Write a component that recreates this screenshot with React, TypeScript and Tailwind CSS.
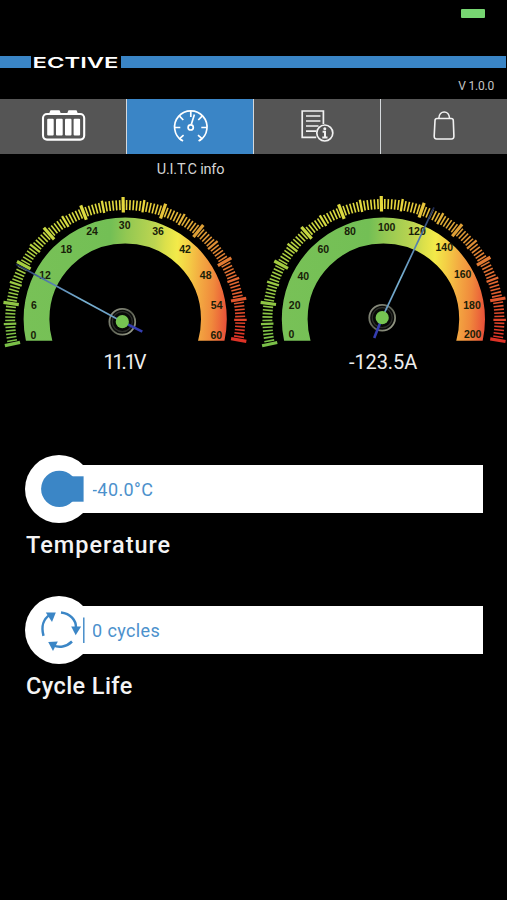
import type { ReactNode } from 'react'

type Label = [text: string, x: number, y: number]

type GaugeProps = {
  id: string
  cx: number
  tickRadius: number
  labels: Label[]
  hub: [number, number]
  needle: [number, number, number, number]
  value: string
  valueClass: string
}

const voltLabels: Label[] = [
  ['0', 33.3, 150],
  ['6', 34, 120],
  ['12', 45, 90.3],
  ['18', 66.3, 64.7],
  ['24', 92, 46.3],
  ['30', 124.7, 40.3],
  ['36', 158, 46.3],
  ['42', 185, 64.7],
  ['48', 205.7, 90],
  ['54', 216.7, 120],
  ['60', 216.3, 150],
]

const ampLabels: Label[] = [
  ['0', 37.3, 149.7],
  ['20', 40.7, 120],
  ['40', 49.3, 91],
  ['60', 69.3, 64.3],
  ['80', 96, 46.7],
  ['100', 132.7, 42.3],
  ['120', 163, 46],
  ['140', 190.3, 62.7],
  ['160', 208.7, 89.7],
  ['180', 218, 120],
  ['200', 218.7, 149.7],
]

const tickStops = [
  [0, 122, 192, 72],
  [0.2, 165, 205, 65],
  [0.35, 215, 220, 65],
  [0.55, 234, 214, 60],
  [0.7, 222, 160, 55],
  [0.85, 226, 105, 50],
  [1, 222, 50, 38],
]

function tickColor(t: number) {
  const i = Math.max(1, tickStops.findIndex((s) => s[0] >= t))
  const a = tickStops[i - 1]
  const b = tickStops[i]
  const k = (t - a[0]) / (b[0] - a[0])
  const mix = (n: number) => Math.round(a[n] + (b[n] - a[n]) * k)
  return `rgb(${mix(1)}, ${mix(2)}, ${mix(3)})`
}

// ten divisions, twelve ticks in each
const TICKS = 120

function Gauge({ id, cx, tickRadius, labels, hub, needle, value, valueClass }: GaugeProps) {
  const ticks = Array.from({ length: TICKS + 1 }, (_, i) => {
    const angle = ((192 - (i * 202) / TICKS) * Math.PI) / 180
    const major = i % 12 === 0
    const medium = i % 6 === 0
    const outer = major ? tickRadius : medium ? tickRadius - 1.5 : tickRadius - 3
    const inner = major ? tickRadius - 15.5 : medium ? tickRadius - 14 : tickRadius - 13
    return {
      x1: cx + Math.cos(angle) * outer,
      y1: 135 - Math.sin(angle) * outer,
      x2: cx + Math.cos(angle) * inner,
      y2: 135 - Math.sin(angle) * inner,
      width: major ? 3.2 : medium ? 2.3 : 1.6,
      color: tickColor(i / TICKS),
    }
  })

  return (
    <div className="flex flex-1 flex-col">
      <svg className="h-[164px] w-full" viewBox="0 0 253.5 164">
        <defs>
          <linearGradient id={`${id}-band`} gradientUnits="userSpaceOnUse" x1={cx - 102} y1="140" x2={cx + 102} y2="152">
            <stop offset="0" stopColor="#78c157" />
            <stop offset="0.4" stopColor="#73bf55" />
            <stop offset="0.48" stopColor="#93c852" />
            <stop offset="0.62" stopColor="#bdd551" />
            <stop offset="0.67" stopColor="#dbe04b" />
            <stop offset="0.73" stopColor="#f3ea49" />
            <stop offset="0.79" stopColor="#f4cd45" />
            <stop offset="0.85" stopColor="#f3ab42" />
            <stop offset="0.92" stopColor="#f0893c" />
            <stop offset="1" stopColor="#e84a38" />
          </linearGradient>
          <linearGradient id={`${id}-needle`} gradientUnits="userSpaceOnUse" x1={needle[0]} y1={needle[1]} x2={hub[0]} y2={hub[1]}>
            <stop offset="0" stopColor="#1c2750" />
            <stop offset="0.25" stopColor="#4c73a4" />
            <stop offset="0.65" stopColor="#79b2d2" />
            <stop offset="1" stopColor="#6597c2" />
          </linearGradient>
          <linearGradient id={`${id}-ring`} x1="0" y1="0" x2="1" y2="1">
            <stop offset="0" stopColor="#9a9d8d" />
            <stop offset="0.5" stopColor="#5c6052" />
            <stop offset="1" stopColor="#a9ad98" />
          </linearGradient>
          <clipPath id={`${id}-clip`}>
            <rect x="0" y="0" width="254" height="155.8" />
          </clipPath>
        </defs>

        {ticks.map((t, i) => (
          <line key={i} x1={t.x1} y1={t.y1} x2={t.x2} y2={t.y2} stroke={t.color} strokeWidth={t.width} />
        ))}

        <circle cx={cx} cy="134.2" r="88.7" fill="none" stroke={`url(#${id}-band)`} strokeWidth="25.8" clipPath={`url(#${id}-clip)`} />

        {labels.map(([text, x, y]) => (
          <text key={text} x={x} y={y + 3.7} textAnchor="middle" className="fill-[#182008] font-['Liberation_Sans',sans-serif] text-[10.5px] font-bold">
            {text}
          </text>
        ))}

        <circle cx={hub[0]} cy={hub[1]} r="12.9" fill="#080908" stroke={`url(#${id}-ring)`} strokeWidth="1.8" />
        <circle cx={hub[0]} cy={hub[1]} r="10" fill="none" stroke="#2c2e29" strokeWidth="1.2" />
        <line x1={needle[0]} y1={needle[1]} x2={hub[0]} y2={hub[1]} stroke={`url(#${id}-needle)`} strokeWidth="1.7" />
        <line x1={hub[0]} y1={hub[1]} x2={needle[2]} y2={needle[3]} stroke="#343db0" strokeWidth="2.6" />
        <circle cx={hub[0]} cy={hub[1]} r="6.6" fill="#76c552" />
      </svg>
      <p className={`text-[20px] leading-[26px] text-[#ededed] ${valueClass}`}>{value}</p>
    </div>
  )
}

function BatteryIcon() {
  return (
    <svg className="h-9 w-12" viewBox="0 0 48 36" fill="none" stroke="#fff">
      <rect x="4" y="6" width="41.2" height="25.6" rx="4" strokeWidth="2.1" />
      <path d="M11 5 12 3h8l1 2M29 5l1-2h7l1 2" fill="#fff" strokeWidth="1.5" />
      <g fill="#fff" stroke="none">
        <rect x="8.2" y="10.7" width="6.5" height="16.8" rx="1" />
        <rect x="17" y="10.7" width="6.7" height="16.8" rx="1" />
        <rect x="26" y="10.7" width="6.5" height="16.8" rx="1" />
        <rect x="34.6" y="10.7" width="6.5" height="16.8" rx="1" />
      </g>
    </svg>
  )
}

function DialIcon() {
  return (
    <svg className="h-9 w-12" viewBox="0 0 48 36" fill="none" stroke="#fff" strokeWidth="1.7">
      <path d="M15.9 32.6A16.2 16.2 0 1 1 33.7 32.6" />
      <path d="M24.8 3v6M8.8 19.5h5.5M35.3 19.5h5.5M13.5 8.2l3.8 3.8M36.1 8.2l-3.8 3.8M13.6 30.6l4-3.4M36 30.6l-4-3.4M13.6 30.6l3.4 2.4M36 30.6l-3.4 2.4" />
      <circle cx="24.7" cy="19.4" r="2.6" />
      <path d="M25.3 16.6 28.4 6.5" />
    </svg>
  )
}

function ReportIcon() {
  return (
    <svg className="h-9 w-12" viewBox="0 0 48 36" fill="none" stroke="#f2f2f2" strokeWidth="1.7">
      <path d="M30.4 16V3H9.2v26.4h14" />
      <path d="M13 8h14.4M13 13h14.4M13 18h12.5M13 23.2h10" />
      <circle cx="31.8" cy="25" r="8" />
      <circle cx="31.8" cy="20.8" r="1.5" fill="#f2f2f2" stroke="none" />
      <path d="M29.6 23.8h2.4v5.5M29.3 29.6h5.2" strokeWidth="2" />
    </svg>
  )
}

function BagIcon() {
  return (
    <svg className="h-9 w-12" viewBox="0 0 48 36" fill="none" stroke="#f2f2f2" strokeWidth="1.6">
      <path d="M17 10.5h14.2q2 0 2.1 2l.6 15.5q.1 3-2.4 3H16.6q-2.5 0-2.4-3L15 12.5q.1-2 2-2Z" />
      <path d="M18.8 10.5c.4-8.6 10.4-8.6 10.8 0" />
    </svg>
  )
}

const tabs = [
  { name: 'Battery', icon: <BatteryIcon />, className: 'bg-[#555]' },
  { name: 'Gauges', icon: <DialIcon />, className: 'bg-[#3a85c6]' },
  { name: 'Info', icon: <ReportIcon />, className: 'bg-[#555]' },
  { name: 'Shop', icon: <BagIcon />, className: 'bg-[#555]' },
]

function ThermometerIcon() {
  return (
    <svg className="h-[68px] w-[68px]" viewBox="0 0 68 68" fill="#3b86c6">
      <circle cx="34.3" cy="33.9" r="18.2" />
      <path d="M34 21.3h24.6v25.4H34Z" />
    </svg>
  )
}

function CycleIcon() {
  return (
    <svg className="h-[68px] w-[68px]" viewBox="0 0 68 68" fill="none" stroke="#3b86c6" strokeWidth="2.5">
      <path d="M18.5 39.8C15.8 30 19 22.5 25 18.8" />
      <path d="M36 16.6C45.5 17.8 51 24 51 31.5" />
      <path d="M47 45.5C41.5 50.8 34 52.3 28 49" />
      <g fill="#3b86c6" stroke="none">
        <path d="m20.8 16.6 10-.2-3.8 9.6Z" />
        <path d="m46.2 30.4 9.9.2-5.4 8.6Z" />
        <path d="m23.2 46 9.6-.5-4.8 9.5Z" />
      </g>
      <path d="M58.8 21.5v25.5" strokeWidth="1.4" />
    </svg>
  )
}

type ReadingProps = { icon: ReactNode; value: string; title: string; titleClass: string }

function Reading({ icon, value, title, titleClass }: ReadingProps) {
  return (
    <section className="pl-[25px] pr-6">
      <div className="flex items-center">
        <div className="z-10 h-[68px] w-[68px] shrink-0 rounded-full bg-white">{icon}</div>
        <div className="-ml-[34px] flex h-12 flex-1 items-center bg-white pt-0.5 pl-[33px] text-[18px] tracking-[0.4px] text-[#4c91cc]">
          {value}
        </div>
      </div>
      <h2 className={`mt-1.5 pl-px text-[23.5px] leading-8 font-medium text-[#f4f4f4] ${titleClass}`}>{title}</h2>
    </section>
  )
}

export default function App() {
  return (
    <main className="flex h-[900px] w-[507px] flex-col overflow-hidden bg-black font-[Roboto,sans-serif]">
      <div className="flex h-14 justify-end pt-[9px] pr-[22px]">
        <div className="h-[9px] w-6 rounded-[1px] bg-[#77d672]" />
      </div>

      <header className="flex h-3 items-stretch">
        <div className="w-[31px] bg-[#3a85c6]" />
        <svg className="h-3 w-[90px] overflow-visible" viewBox="0 0 90 12">
          <text x="1.5" y="11.5" textLength="86" lengthAdjust="spacingAndGlyphs" className="fill-white font-[Inter,sans-serif] text-[15px] font-semibold">
            ECTIVE
          </text>
        </svg>
        <div className="mr-px flex-1 bg-[#3a85c6]" />
      </header>
      <p className="h-[30.5px] pt-[9px] pr-[13px] text-right text-[12px] leading-[18px] tracking-[-0.2px] text-[#c6c6c6]">V 1.0.0</p>

      <nav className="grid h-[55px] shrink-0 grid-cols-4 gap-[1.5px] bg-[#d5d9dc]">
        {tabs.map((tab) => (
          <button key={tab.name} aria-label={tab.name} className={`flex items-center justify-center ${tab.className}`}>
            {tab.icon}
          </button>
        ))}
      </nav>
      <p className="w-[254px] pt-1.5 pl-[127px] text-center text-[14.5px] leading-5 tracking-[-0.2px] text-[#d4d4d4]">U.I.T.C info</p>

      <div className="mt-[5px] flex">
        <Gauge
          id="volt"
          cx={125.2}
          tickRadius={123}
          labels={voltLabels}
          hub={[122.3, 136.7]}
          needle={[16, 79.3, 142.3, 146.7]}
          value="11.1V"
          valueClass="pl-[103.5px] tracking-[-2.2px]"
        />
        <Gauge
          id="amp"
          cx={129.4}
          tickRadius={124}
          labels={ampLabels}
          hub={[128.2, 132.7]}
          needle={[180, 22.3, 120.2, 153]}
          value="-123.5A"
          valueClass="pl-[95.5px] tracking-[-0.1px]"
        />
      </div>

      <div className="mt-20 flex flex-col gap-[35px]">
        <Reading icon={<ThermometerIcon />} value="-40.0°C" title="Temperature" titleClass="tracking-[1px]" />
        <Reading icon={<CycleIcon />} value="0 cycles" title="Cycle Life" titleClass="tracking-[0.4px]" />
      </div>
    </main>
  )
}
